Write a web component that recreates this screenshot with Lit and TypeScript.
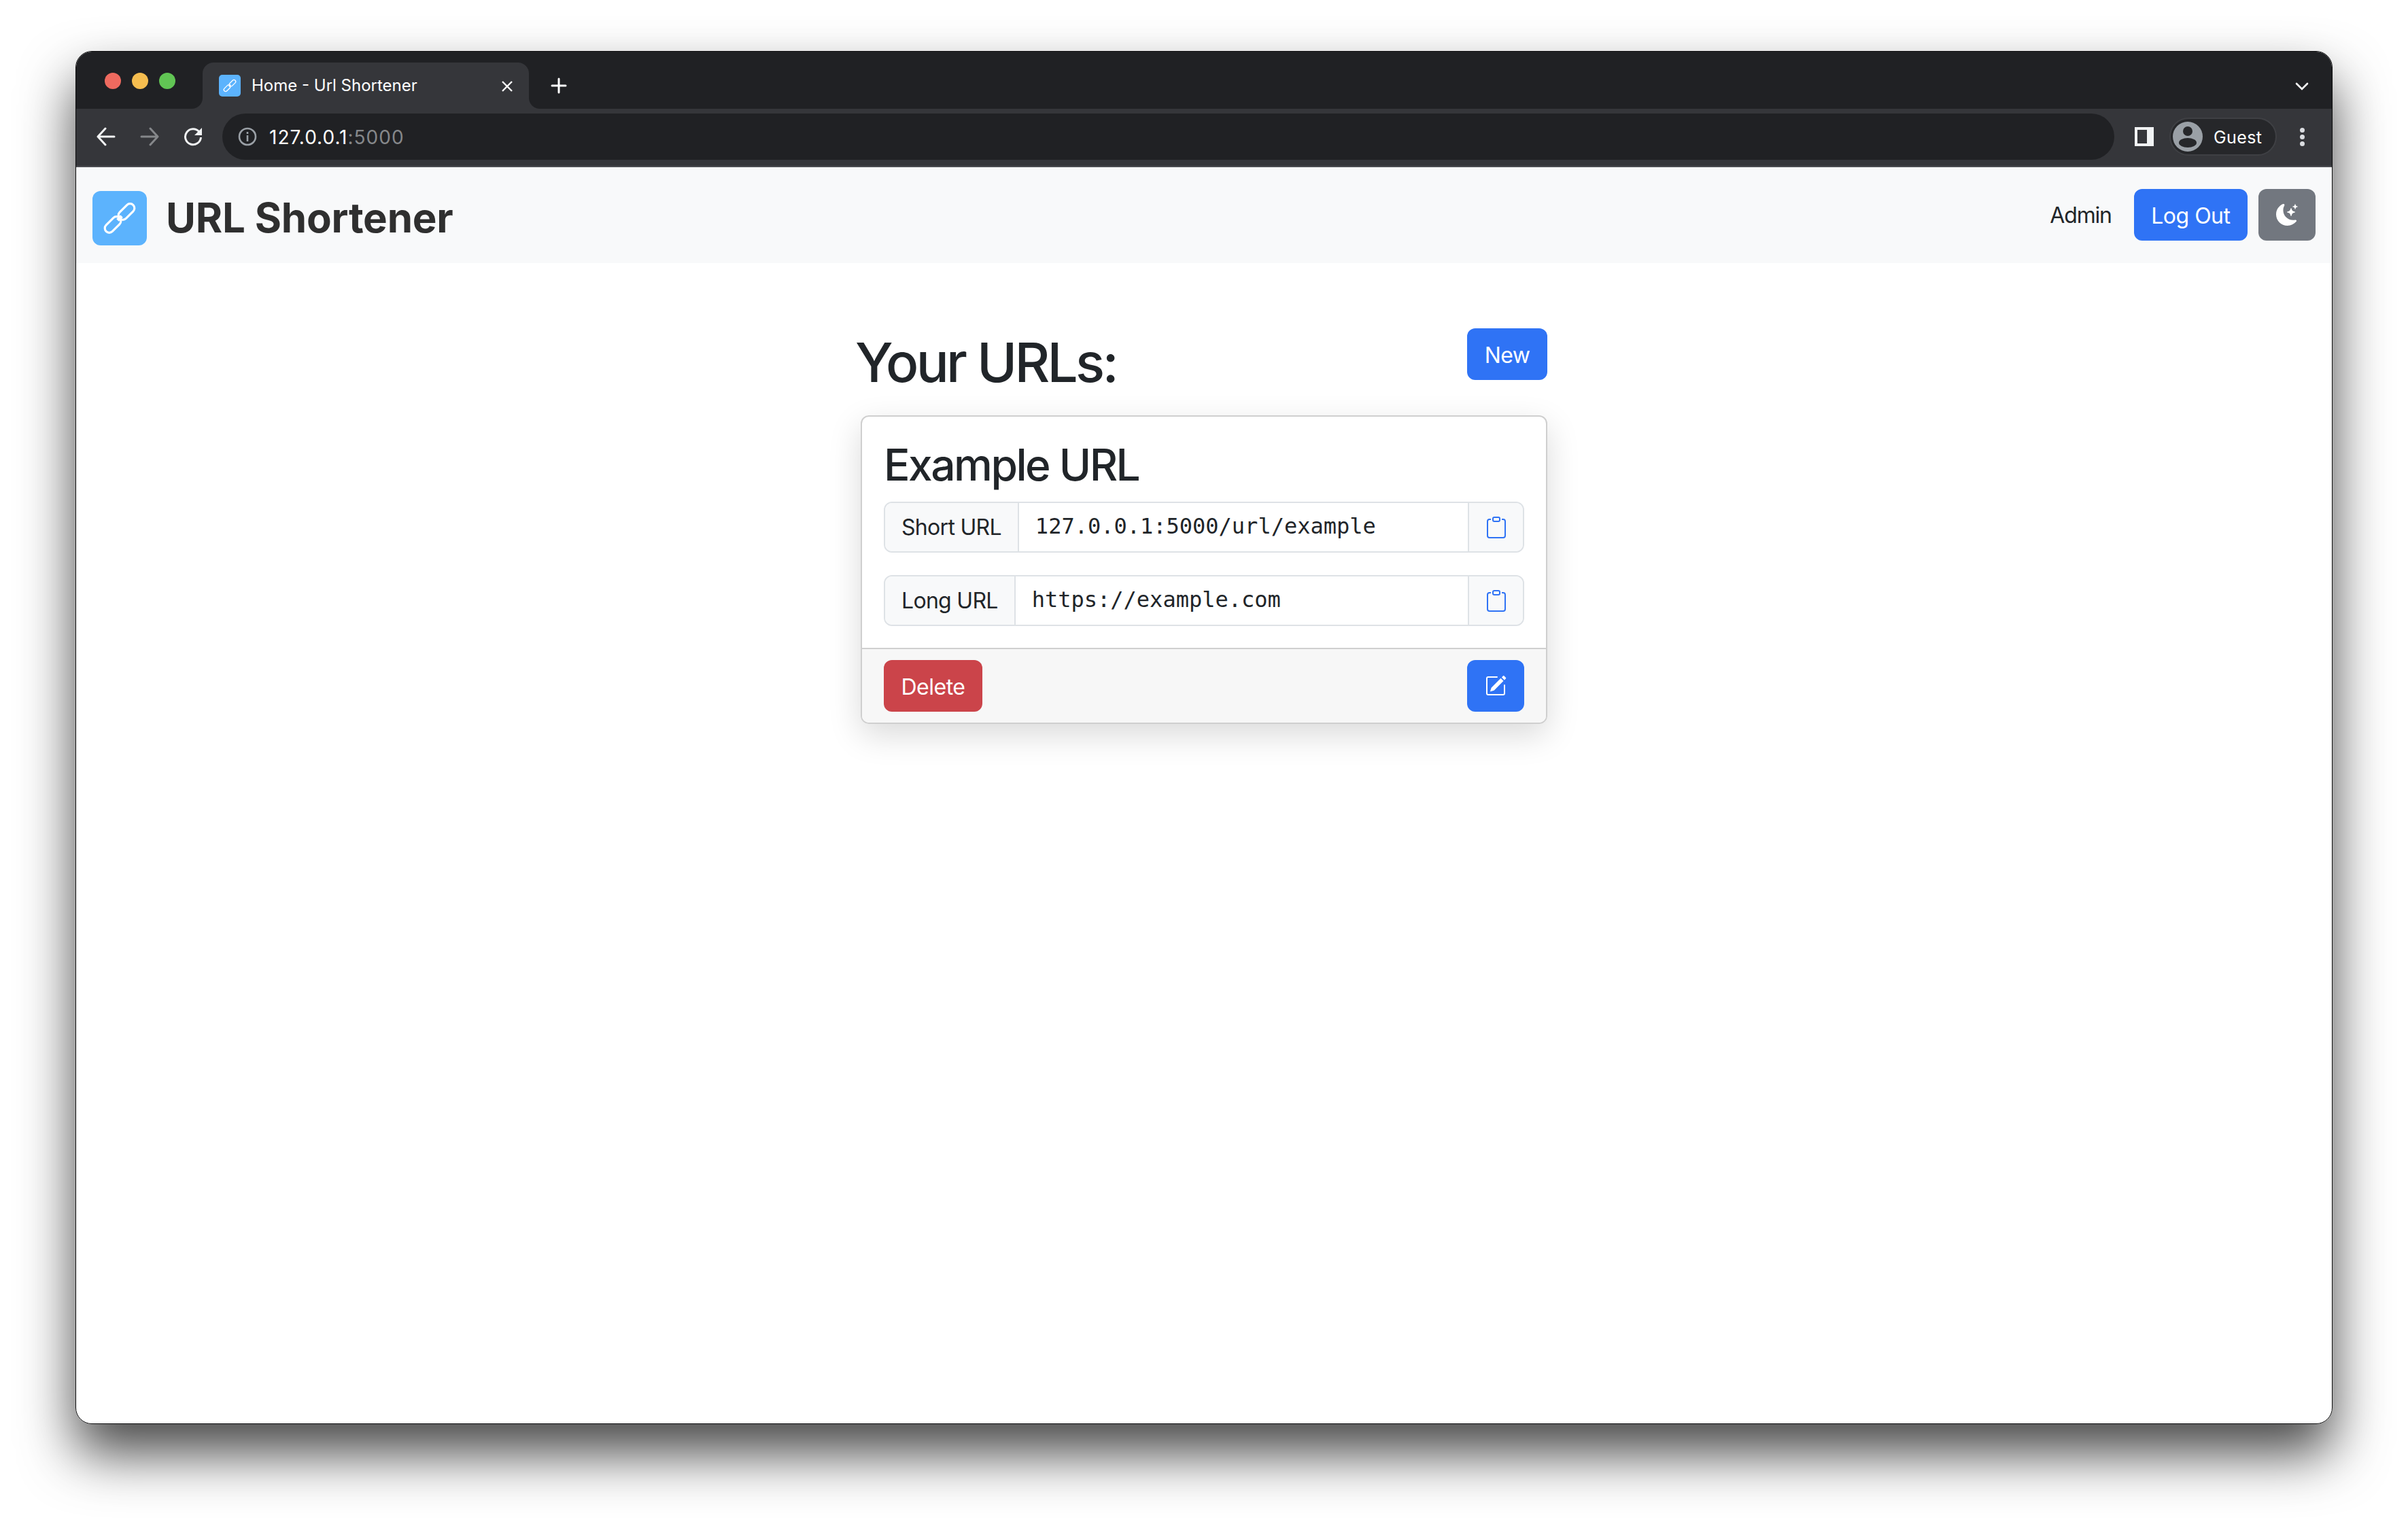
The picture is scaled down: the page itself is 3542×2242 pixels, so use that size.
import { LitElement, html, css, svg } from "lit";
import { customElement } from "lit/decorators.js";

const clipboard = html`<svg class="icon" viewBox="0 0 16 16" fill="currentColor">
  <path d="M4 1.5H3a2 2 0 0 0-2 2V14a2 2 0 0 0 2 2h10a2 2 0 0 0 2-2V3.5a2 2 0 0 0-2-2h-1v1h1a1 1 0 0 1 1 1V14a1 1 0 0 1-1 1H3a1 1 0 0 1-1-1V3.5a1 1 0 0 1 1-1h1v-1z" />
  <path d="M9.5 1a.5.5 0 0 1 .5.5v1a.5.5 0 0 1-.5.5h-3a.5.5 0 0 1-.5-.5v-1a.5.5 0 0 1 .5-.5h3zm-3-1A1.5 1.5 0 0 0 5 1.5v1A1.5 1.5 0 0 0 6.5 4h3A1.5 1.5 0 0 0 11 2.5v-1A1.5 1.5 0 0 0 9.5 0h-3z" />
</svg>`;

// chain link logo, two links at 45 degrees meeting in the middle
const links = svg`
  <g fill="none" stroke="#fff" stroke-width="3.2">
    <rect x="36" y="24" width="28" height="13" rx="6.5" transform="rotate(-45 50 30.5)" />
    <rect x="16" y="43" width="28" height="13" rx="6.5" transform="rotate(-45 30 49.5)" />
    <path d="M37 43 L43 37" stroke-width="5" />
  </g>`;

@customElement("app-root")
export class AppRoot extends LitElement {
  static styles = css`
    :host {
      display: block;
      width: 3542px;
      height: 2242px;
      padding: 75px 0 0 111px;
      box-sizing: border-box;
      background: #fff;
      font-family: Inter, "Liberation Sans", sans-serif;
      color: #212529;
    }
    * { box-sizing: border-box; }
    svg { display: block; }

    .shadow {
      width: 3320px;
      height: 2020px;
      border-radius: 24px;
      box-shadow: 0 43px 80px rgba(0, 0, 0, 0.72);
    }
    .window {
      height: 100%;
      border: 1px solid #0c0c0d;
      border-radius: 24px;
      overflow: hidden;
      background: #fff;
    }

    /* browser chrome */
    .strip {
      height: 84px;
      background: #202124;
      display: flex;
      align-items: flex-end;
    }
    .lights {
      width: 186px;
      height: 100%;
      display: flex;
      gap: 16px;
      padding: 31px 0 0 42px;
    }
    .light { width: 24px; height: 24px; border-radius: 50%; }
    .tab {
      position: relative;
      width: 480px;
      height: 68px;
      background: #35363a;
      border-radius: 16px 16px 0 0;
      display: flex;
      align-items: flex-start;
      padding: 18px 0 0 24px;
      color: #fff;
      font-size: 24px;
      line-height: 32px;
    }
    .tab::before, .tab::after {
      content: "";
      position: absolute;
      bottom: 0;
      width: 16px;
      height: 16px;
    }
    .tab::before {
      left: -16px;
      background: radial-gradient(circle at 0 0, #202124 15.5px, #35363a 16.5px);
    }
    .tab::after {
      right: -16px;
      background: radial-gradient(circle at 100% 0, #202124 15.5px, #35363a 16.5px);
    }
    .favicon { width: 32px; height: 32px; border-radius: 5px; background: #5cb3fd; margin-right: 16px; }
    .tab-title { flex: 1; }
    .tab-close { width: 20px; height: 20px; margin: 7px 22px 0 0; }
    .tab-new { width: 24px; height: 24px; margin: 0 0 22px 32px; }
    .tab-list { width: 20px; height: 12px; margin: 0 34px 27px auto; }

    .toolbar {
      height: 86px;
      background: #35363a;
      border-bottom: 2px solid #4b4c50;
      display: flex;
      align-items: center;
      padding-bottom: 2px;
    }
    .nav-icons {
      display: flex;
      gap: 36px;
      padding-left: 30px;
      width: 216px;
    }
    .nav-icons svg { width: 28px; height: 28px; }
    .omnibox {
      width: 2783px;
      height: 68px;
      border-radius: 34px;
      background: #202124;
      display: flex;
      align-items: center;
      padding: 2px 0 0 23px;
      font-size: 28px;
      letter-spacing: 1px;
      color: #fff;
      margin-left: -1px;
    }
    .omnibox svg { width: 28px; height: 28px; margin: -2px 18px 0 0; }
    .omnibox span { color: #85878a; }
    .panel { width: 28px; height: 28px; margin-left: 30px; background: #f1f3f4; padding: 4px 10px 4px 4px; }
    .panel i { display: block; height: 100%; background: #35363a; }
    .profile {
      width: 158px;
      height: 56px;
      margin-left: 23px;
      border: 2px solid #3f4044;
      border-radius: 28px;
      background: #26272a;
      display: flex;
      align-items: center;
      padding-left: 3px;
      color: #fff;
      font-size: 25px;
      letter-spacing: 0.4px;
      line-height: 54px;
    }
    .profile svg { width: 44px; height: 44px; margin-right: 16px; }
    .profile span { padding-top: 2px; }
    .dots { margin-left: 34px; display: flex; flex-direction: column; gap: 3px; }
    .dots i { width: 7px; height: 7px; border-radius: 50%; background: #dadce0; }

    /* page */
    .navbar {
      height: 141px;
      background: #f8f9fa;
      display: flex;
      align-items: flex-start;
      padding: 32px 24px 0 24px;
    }
    .logo {
      width: 80px;
      height: 80px;
      border-radius: 12px;
      background: #5cb3fd;
      margin: 3px 28px 0 0;
    }
    .brand {
      font-size: 60px;
      font-weight: 700;
      line-height: 78px;
      color: #2f2f2f;
      letter-spacing: -0.2px;
      margin-top: 3px;
    }
    .admin {
      margin-left: auto;
      margin-right: 33px;
      font-size: 32px;
      line-height: 78px;
      letter-spacing: -1.2px;
    }

    .btn {
      height: 76px;
      border: 0;
      border-radius: 12px;
      color: #fff;
      background: #2f73f5;
      font: inherit;
      font-size: 32px;
      letter-spacing: -0.5px;
      padding: 2px 25.5px 0;
      display: flex;
      align-items: center;
      justify-content: center;
    }
    .btn.gray { background: #72777f; margin-left: 16px; width: 84px; padding: 0; }
    .btn.red { background: #cb444a; }
    .btn.square { width: 84px; padding: 0; }
    .icon { width: 32px; height: 32px; }

    .main { width: 1018px; margin-left: 1146px; padding-top: 96px; }
    .head { display: flex; justify-content: space-between; align-items: flex-start; }
    h1 {
      margin: 0;
      font-size: 80px;
      font-weight: 500;
      line-height: 100px;
      letter-spacing: -3.7px;
    }
    .card {
      margin: 28px 0 0 8px;
      border: 2px solid #cfcfcf;
      border-radius: 12px;
      overflow: hidden;
      box-shadow: 0 16px 48px rgba(0, 0, 0, 0.15);
    }
    .card-body { padding: 32px; display: flex; flex-direction: column; gap: 33px; }
    h2 {
      margin: 0 0 -18px;
      font-size: 64px;
      font-weight: 500;
      line-height: 78px;
      letter-spacing: -2.5px;
    }
    .group {
      height: 75px;
      display: flex;
      border: 2px solid #dee2e6;
      border-radius: 12px;
      font-size: 32px;
      overflow: hidden;
    }
    .prefix {
      background: #f8f9fa;
      border-right: 2px solid #dee2e6;
      padding: 0 24px;
      line-height: 71px;
      letter-spacing: -0.7px;
    }
    .value {
      flex: 1;
      padding: 0 24px;
      line-height: 69px;
      font-family: "DejaVu Sans Mono", monospace;
    }
    .copy {
      width: 81px;
      background: #f8f9fa;
      border-left: 2px solid #dee2e6;
      color: #2f73f5;
      display: flex;
      align-items: center;
      justify-content: center;
    }
    .card-footer {
      height: 110px;
      border-top: 2px solid #cfcfcf;
      background: #f7f7f7;
      display: flex;
      justify-content: space-between;
      padding: 16px 32px 0;
    }
  `;

  render() {
    return html`
      <div class="shadow">
        <div class="window">
          <div class="strip">
            <div class="lights">
              <div class="light" style="background:#ee6a5f"></div>
              <div class="light" style="background:#f5bd4f"></div>
              <div class="light" style="background:#61c554"></div>
            </div>
            <div class="tab">
              <svg class="favicon" viewBox="0 0 80 80">${links}</svg>
              <div class="tab-title">Home - Url Shortener</div>
              <svg class="tab-close" viewBox="0 0 20 20" stroke="#fff" stroke-width="2.4">
                <path d="M3 3 L17 17 M17 3 L3 17" />
              </svg>
            </div>
            <svg class="tab-new" viewBox="0 0 24 24" stroke="#fff" stroke-width="3" stroke-linecap="round">
              <path d="M12 2 V22 M2 12 H22" />
            </svg>
            <svg class="tab-list" viewBox="0 0 20 12" fill="none" stroke="#fff" stroke-width="2.6" stroke-linecap="round">
              <path d="M2 2 L10 10 L18 2" />
            </svg>
          </div>
          <div class="toolbar">
            <div class="nav-icons">
              <svg viewBox="0 0 28 28" fill="none" stroke="#f1f3f4" stroke-width="3" stroke-linecap="round" stroke-linejoin="round">
                <path d="M26 14 H2 M13 2 L2 14 L13 26" />
              </svg>
              <svg viewBox="0 0 28 28" fill="none" stroke="#85878a" stroke-width="3" stroke-linecap="round" stroke-linejoin="round">
                <path d="M2 14 H26 M15 2 L26 14 L15 26" />
              </svg>
              <svg viewBox="0 0 28 28" fill="none" stroke="#f1f3f4" stroke-width="3">
                <path d="M23 7 A11.5 11.5 0 1 0 25.5 15" />
                <path d="M27 1 V12 H16 Z" fill="#f1f3f4" stroke="none" />
              </svg>
            </div>
            <div class="omnibox">
              <svg viewBox="0 0 28 28" fill="none" stroke="#9aa0a6" stroke-width="2.6">
                <circle cx="14" cy="14" r="12" />
                <path d="M14 12 V21 M14 7 V10" />
              </svg>
              127.0.0.1<span>:5000</span>
            </div>
            <div class="panel"><i></i></div>
            <div class="profile">
              <svg viewBox="0 0 44 44">
                <circle cx="22" cy="22" r="22" fill="#9aa0a6" />
                <circle cx="22" cy="14" r="7" fill="#26272a" />
                <ellipse cx="22" cy="31" rx="13" ry="7" fill="#26272a" />
              </svg>
              <span>Guest</span>
            </div>
            <div class="dots"><i></i><i></i><i></i></div>
          </div>

          <div class="navbar">
            <svg class="logo" viewBox="0 0 80 80">${links}</svg>
            <div class="brand">URL Shortener</div>
            <div class="admin">Admin</div>
            <button class="btn">Log Out</button>
            <button class="btn gray">
              <svg class="icon" viewBox="0 0 16 16" fill="currentColor">
                <path d="M6 .278a.768.768 0 0 1 .08.858 7.208 7.208 0 0 0-.878 3.46c0 4.021 3.278 7.277 7.318 7.277.527 0 1.04-.055 1.533-.16a.787.787 0 0 1 .81.316.733.733 0 0 1-.031.893A8.349 8.349 0 0 1 8.344 16C3.734 16 0 12.286 0 7.71 0 4.266 2.114 1.312 5.124.06A.752.752 0 0 1 6 .278z" />
                <path d="M10.794 3.148a.217.217 0 0 1 .412 0l.387 1.162c.173.518.579.924 1.097 1.097l1.162.387a.217.217 0 0 1 0 .412l-1.162.387a1.734 1.734 0 0 0-1.097 1.097l-.387 1.162a.217.217 0 0 1-.412 0l-.387-1.162A1.734 1.734 0 0 0 9.31 6.593l-1.162-.387a.217.217 0 0 1 0-.412l1.162-.387a1.734 1.734 0 0 0 1.097-1.097l.387-1.162zM13.863.099a.145.145 0 0 1 .274 0l.258.774c.115.346.386.617.732.732l.774.258a.145.145 0 0 1 0 .274l-.774.258a1.156 1.156 0 0 0-.732.732l-.258.774a.145.145 0 0 1-.274 0l-.258-.774a1.156 1.156 0 0 0-.732-.732l-.774-.258a.145.145 0 0 1 0-.274l.774-.258c.346-.115.617-.386.732-.732L13.863.1z" />
              </svg>
            </button>
          </div>

          <div class="main">
            <div class="head">
              <h1>Your URLs:</h1>
              <button class="btn">New</button>
            </div>
            <div class="card">
              <div class="card-body">
                <h2>Example URL</h2>
                <div class="group">
                  <div class="prefix">Short URL</div>
                  <div class="value">127.0.0.1:5000/url/example</div>
                  <div class="copy">${clipboard}</div>
                </div>
                <div class="group">
                  <div class="prefix">Long URL</div>
                  <div class="value">https://example.com</div>
                  <div class="copy">${clipboard}</div>
                </div>
              </div>
              <div class="card-footer">
                <button class="btn red">Delete</button>
                <button class="btn square">
                  <svg class="icon" viewBox="0 0 16 16" fill="currentColor">
                    <path d="M15.502 1.94a.5.5 0 0 1 0 .706L14.459 3.69l-2-2L13.502.646a.5.5 0 0 1 .707 0l1.293 1.293zm-1.75 2.456-2-2L4.939 9.21a.5.5 0 0 0-.121.196l-.805 2.414a.25.25 0 0 0 .316.316l2.414-.805a.5.5 0 0 0 .196-.12l6.813-6.814z" />
                    <path d="M1 13.5A1.5 1.5 0 0 0 2.5 15h11a1.5 1.5 0 0 0 1.5-1.5v-6a.5.5 0 0 0-1 0v6a.5.5 0 0 1-.5.5h-11a.5.5 0 0 1-.5-.5v-11a.5.5 0 0 1 .5-.5H9a.5.5 0 0 0 0-1H2.5A1.5 1.5 0 0 0 1 2.5v11z" />
                  </svg>
                </button>
              </div>
            </div>
          </div>
        </div>
      </div>
    `;
  }
}
